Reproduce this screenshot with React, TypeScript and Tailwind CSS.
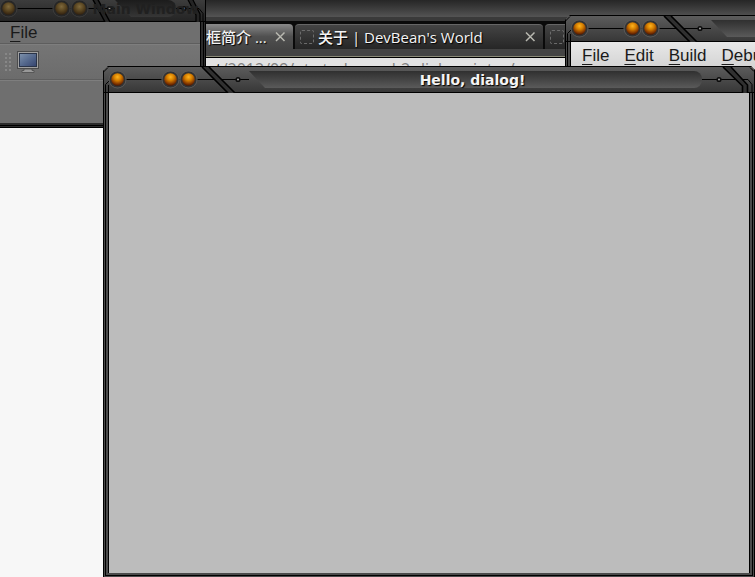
import React from "react";

type Tone = "active" | "dimmed";

function Ball({ cx, tone }: { cx: number; tone: Tone }) {
  return (
    <g>
      <circle cx={cx} cy={12.5} r={9} fill={tone === "active" ? "#5a5a5a" : "#3c3c3c"} />
      <circle cx={cx} cy={12.5} r={8} fill={tone === "active" ? "#333" : "#262626"} />
      <circle cx={cx} cy={12.5} r={6.3} fill={`url(#ball-${tone})`} />
    </g>
  );
}

function Dot({ cx }: { cx: number }) {
  return (
    <g>
      <circle cx={cx} cy={12.5} r={2.6} fill="#0c0c0c" />
      <circle cx={cx} cy={12.5} r={1} fill="#a0a0a0" />
    </g>
  );
}

function Gradients() {
  return (
    <svg className="absolute size-0" aria-hidden="true">
      <defs>
        <radialGradient id="ball-active" cx="0.5" cy="0.3" r="0.7">
          <stop offset="0" stopColor="#ffb41e" />
          <stop offset="0.4" stopColor="#d47e00" />
          <stop offset="0.75" stopColor="#8a3c00" />
          <stop offset="1" stopColor="#4a1400" />
        </radialGradient>
        <radialGradient id="ball-dimmed" cx="0.5" cy="0.35" r="0.7">
          <stop offset="0" stopColor="#806a3c" />
          <stop offset="0.5" stopColor="#584420" />
          <stop offset="1" stopColor="#2a1a0c" />
        </radialGradient>
      </defs>
    </svg>
  );
}

function LeftCap({ tone }: { tone: Tone }) {
  const band = tone === "active" ? "#303030" : "#242424";
  const compact = tone === "dimmed";
  return (
    <svg
      className={compact ? "h-[26px] w-[120px] shrink-0" : "h-[26px] w-[145px] shrink-0"}
      viewBox={compact ? "1 0 120 26" : "1 0 145 26"}
      aria-hidden="true"
    >
      <path d="M0 5.5 L5 0.5" stroke="#000" fill="none" />
      <path d={compact ? "M2.5 26V17.5L6 12.5H121" : "M2.5 26V17.5L7.5 12.5H146"} stroke="#000" fill="none" />
      <path d="M5.500 26V18" stroke="#000" fill="none" />
      <Ball cx={14.5} tone={tone} />
      <Ball cx={67.5} tone={tone} />
      <Ball cx={85.5} tone={tone} />
      {compact ? (
        <g>
          <path d="M97 0L111 26H116L102 0Z" fill={band} />
          <path d="M97 0L111 26M102 0L116 26" stroke="#000" strokeWidth="1.4" />
          <Dot cx={115.5} />
        </g>
      ) : (
        <g>
          <path d="M99 0L125 26H132L106 0Z" fill={band} />
          <path d="M99 0L125 26M106 0L132 26" stroke="#000" strokeWidth="1.6" />
          <Dot cx={135} />
        </g>
      )}
    </svg>
  );
}

function RightCap({ tone }: { tone: Tone }) {
  const band = tone === "active" ? "#303030" : "#242424";
  return tone === "active" ? (
    <svg className="h-[26px] w-[52px] shrink-0" viewBox="0 0 52 26" aria-hidden="true">
      <path d="M0 12.5H46L50 17.5V26" stroke="#000" fill="none" />
      <path d="M21 0L40.5 19V26H45.5V18L29 0Z" fill={band} />
      <path d="M21 0L40.5 19V26M29 0L45.5 18V26" stroke="#000" strokeWidth="1.6" fill="none" />
      <path d="M48 0.5L52 4.5" stroke="#000" />
      <Dot cx={17} />
    </svg>
  ) : (
    <svg className="h-[26px] w-[29px] shrink-0" viewBox="0 0 29 26" aria-hidden="true">
      <path d="M0 12.5H23L27 17.5V26" stroke="#000" fill="none" />
      <path d="M10 0L20 19V26H24V18L15 0Z" fill={band} />
      <path d="M10 0L20 19V26M15 0L24 18V26" stroke="#000" strokeWidth="1.2" fill="none" />
      <Dot cx={8} />
    </svg>
  );
}

function TitleBar({ title, tone }: { title: string; tone: Tone }) {
  const active = tone === "active";
  return (
    <header
      className={
        "flex h-[26px] shrink-0 border-b border-black bg-linear-to-b " +
        (active ? "from-[#5c5c5c] to-[#383838]" : "from-[#414141] to-[#242424]")
      }
    >
      <LeftCap tone={tone} />
      <div className="relative mt-1 flex h-[17px] min-w-0 flex-1 items-center justify-center">
        <div
          className={
            "absolute inset-0 rounded-r-lg bg-linear-to-b [clip-path:polygon(0_0,100%_0,100%_100%,16px_100%)] " +
            (active ? "from-[#303030] to-[#5a5a5a]" : "from-[#1c1c1c] to-[#363636]")
          }
        />
        <h2
          className={
            "relative font-['DejaVu_Sans',sans-serif] text-sm leading-4 font-bold whitespace-nowrap " +
            (active ? "pr-1.5 text-[#f4f4f4] [text-shadow:1px_1px_1px_#000]" : "text-[#202020]")
          }
        >
          {title}
        </h2>
      </div>
      <RightCap tone={tone} />
    </header>
  );
}

function Window({
  title,
  tone = "active",
  className,
  children,
}: {
  title: string;
  tone?: Tone;
  className: string;
  children?: React.ReactNode;
}) {
  return (
    <section
      aria-label={title}
      className={
        "absolute flex flex-col border border-black [clip-path:polygon(0_5px,5px_0,calc(100%-4px)_0,100%_4px,100%_100%,0_100%)] " +
        (tone === "active" ? "bg-[#4a4a4a] " : "bg-[#2c2c2c] ") +
        className
      }
    >
      <TitleBar title={title} tone={tone} />
      <div className="flex min-h-0 flex-1 flex-col px-px pb-px">
        <div className="flex min-h-0 flex-1 flex-col border-x border-b border-black px-0.5 pb-0.5">
          <div className="flex min-h-0 flex-1 flex-col border-x border-black">{children}</div>
        </div>
      </div>
    </section>
  );
}

function MenuItem({ label }: { label: string }) {
  return (
    <button
      type="button"
      className="font-['Liberation_Sans',Arial,sans-serif] text-[17px] leading-5 whitespace-nowrap"
    >
      <span className="underline underline-offset-3">{label[0]}</span>
      {label.slice(1)}
    </button>
  );
}

function MonitorIcon() {
  return (
    <svg className="h-6 w-6" viewBox="0 0 24 24" aria-hidden="true">
      <defs>
        <linearGradient id="screen" x1="0" y1="0" x2="1" y2="1">
          <stop offset="0" stopColor="#7f93ac" />
          <stop offset="0.5" stopColor="#566a8e" />
          <stop offset="1" stopColor="#34436e" />
        </linearGradient>
      </defs>
      <rect x="1.5" y="1.5" width="21" height="17" fill="#a0a0a0" stroke="#4c4c4c" />
      <rect x="3.5" y="3.5" width="17" height="13" fill="url(#screen)" stroke="#2a3448" />
      <path d="M8 19h8v1.5h2V22.5H6V20.5h2z" fill="#999" stroke="#4c4c4c" strokeWidth="0.8" />
    </svg>
  );
}

function Grip() {
  return (
    <svg className="h-5 w-1.5" viewBox="0 0 6 20" aria-hidden="true">
      {[2, 6, 10, 14, 18].map((y) => (
        <path key={y} d={`M0 ${y}h2M4 ${y}h2`} stroke="#8f8f8f" strokeWidth="1.4" />
      ))}
    </svg>
  );
}

function Favicon() {
  return <span className="size-3.5 shrink-0 rounded-xs border border-dashed border-[#6c6c6c]" />;
}

function CloseButton() {
  return (
    <button type="button" aria-label="Close tab" className="shrink-0">
      <svg className="size-3" viewBox="0 0 12 12" aria-hidden="true">
        <path d="M2 1.500L10.500 10M10.500 1.500L2 10" stroke="#b8b8b0" strokeWidth="1.5" />
      </svg>
    </button>
  );
}

const tabText =
  "flex-1 font-['Open_Sans','Noto_Sans_CJK_SC',sans-serif] text-[15px] leading-5 font-medium whitespace-nowrap text-[#f4f4f4] [text-shadow:1px_1px_1px_#000]";

function Browser() {
  return (
    <section aria-label="Browser" className="absolute inset-x-0 top-0 left-[206px] h-[70px] bg-[#414141]">
      <div className="h-[17px] bg-linear-to-b from-[#262626] to-[#545454]" />
      <div className="h-1 bg-[#3a3a3a]" />
      <nav className="flex h-7 gap-0.5 bg-[#0a0a0a] pt-[3px]" aria-label="Tabs">
        <div className="flex w-[87px] items-center rounded-tr bg-linear-to-b from-[#8a8a8a] via-[#505050] to-[#444] pr-[7px]">
          <span className={tabText}>框简介 ...</span>
          <CloseButton />
        </div>
        <div className="flex w-[248px] items-center gap-1 rounded-t border-t border-[#666] bg-linear-to-b from-[#444] to-[#262626] pr-[7px] pl-[5px]">
          <Favicon />
          <span className={tabText}>关于 | DevBean's World</span>
          <CloseButton />
        </div>
        <div className="flex flex-1 items-center rounded-t border-t border-[#666] bg-linear-to-b from-[#444] to-[#262626] pl-[5px]">
          <Favicon />
        </div>
      </nav>
      <div className="h-2 border-b border-[#8a8a78] bg-[#444]" />
      <div className="h-3 overflow-hidden border-t border-black bg-[#e2e2e2] pl-2.5">
        <p className="pt-px font-['Open_Sans',sans-serif] text-base leading-5 whitespace-nowrap text-[#808080]">
          <span className="text-black">t</span>/2012/09/qt-study-road-2-dialogs-intro/
        </p>
      </div>
    </section>
  );
}

export default function App() {
  return (
    <main className="relative h-screen w-full overflow-hidden bg-[#f7f7f7] text-[#1a1a1a]">
      <Gradients />
      <Browser />
      <Window title="Main Window" tone="dimmed" className="-top-[5px] -left-1.5 h-[133px] w-[212px]">
        <div className="flex flex-1 flex-col bg-[#6f6f6f]">
          <nav className="flex h-[22px] items-center border-b border-[#5e5e5e] pl-[10px]" aria-label="Menu">
            <MenuItem label="File" />
          </nav>
          <div className="flex h-9 items-center gap-[5px] border-t border-b border-t-[#7e7e7e] border-b-[#5e5e5e] bg-linear-to-b from-[#757575] to-[#6c6c6c] pl-[5px]">
            <Grip />
            <button type="button" aria-label="Open dialog">
              <MonitorIcon />
            </button>
          </div>
          <div className="flex-1 border-t border-[#7e7e7e]" />
        </div>
      </Window>
      <Window title="Qt Creator" className="top-[15px] left-[565px] h-[300px] w-[640px]">
        <nav
          className="flex h-7 items-center gap-[15px] bg-linear-to-b from-[#e8e8e8] to-[#d2d2d2] pl-[11px]"
          aria-label="Menu"
        >
          <MenuItem label="File" />
          <MenuItem label="Edit" />
          <MenuItem label="Build" />
          <MenuItem label="Debug" />
        </nav>
      </Window>
      <Window title="Hello, dialog!" className="top-[66px] right-0 -bottom-px left-[103px]">
        <div className="flex-1 bg-[#bcbcbc]" />
      </Window>
    </main>
  );
}
